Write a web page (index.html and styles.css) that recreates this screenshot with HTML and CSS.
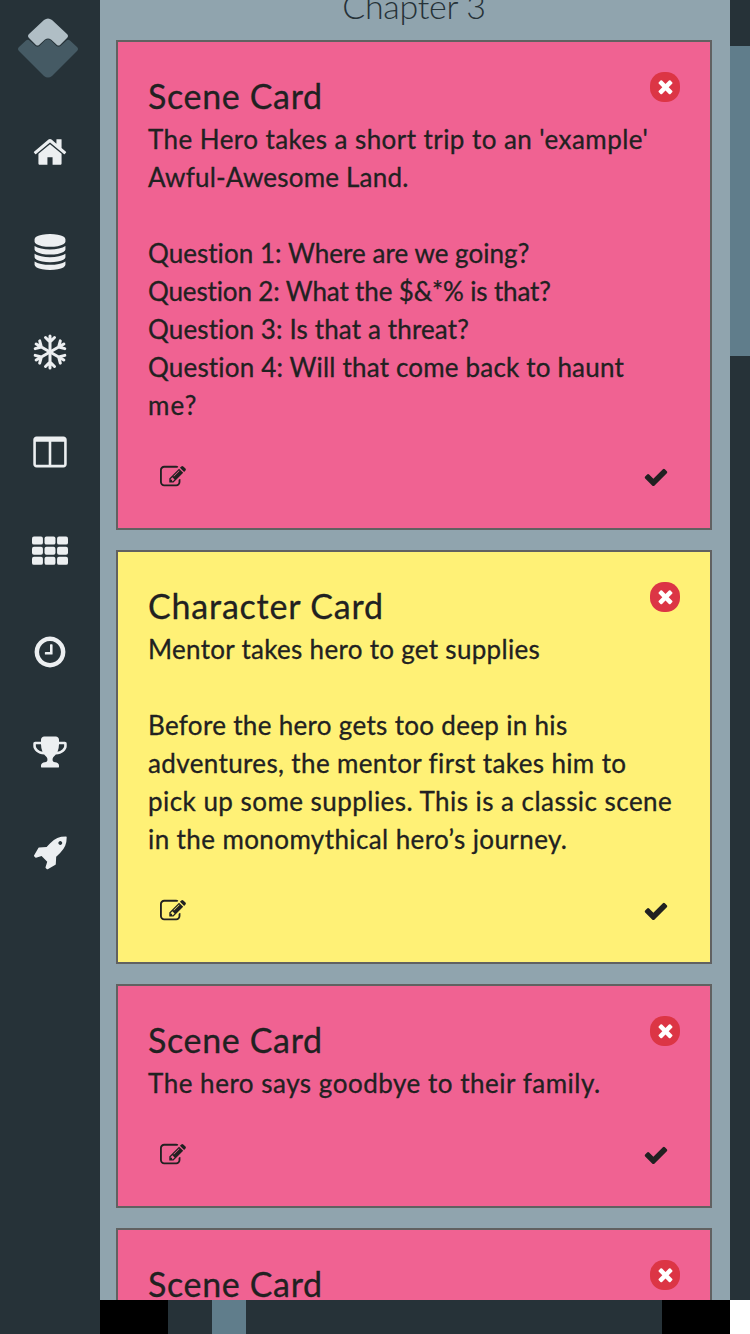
FILE: index.html
```html
<!DOCTYPE html>
<html lang="en">
<head>
<meta charset="utf-8">
<title>Chapter 3</title>
<link rel="stylesheet" href="styles.css">
</head>
<body>
<svg class="defs" width="0" height="0">
  <symbol id="check" viewBox="0 0 1792 1792"><path d="M1671 566q0 40-28 68l-724 724-136 136q-28 28-68 28t-68-28l-136-136-362-362q-28-28-28-68t28-68l136-136q28-28 68-28t68 28l294 295 656-657q28-28 68-28t68 28l136 136q28 28 28 68z"/></symbol>
  <symbol id="close" viewBox="0 0 1792 1792"><path d="M1490 1322q0 40-28 68l-136 136q-28 28-68 28t-68-28l-294-294-294 294q-28 28-68 28t-68-28l-136-136q-28-28-28-68t28-68l294-294-294-294q-28-28-28-68t28-68l136-136q28-28 68-28t68 28l294 294 294-294q28-28 68-28t68 28l136 136q28 28 28 68t-28 68l-294 294 294 294q28 28 28 68z"/></symbol>
  <symbol id="edit" viewBox="0 0 1792 1792"><path d="M888 1184l116-116-152-152-116 116v56h96v96h56zm440-720q-16-16-33 1l-350 350q-17 17-1 33t33-1l350-350q17-17 1-33zm80 594v190q0 119-84.5 203.5t-203.5 84.5h-832q-119 0-203.5-84.5t-84.5-203.5v-832q0-119 84.5-203.5t203.5-84.5h832q63 0 117 25 15 7 18 23 3 17-9 29l-49 49q-14 14-32 8-23-6-45-6h-832q-66 0-113 47t-47 113v832q0 66 47 113t113 47h832q66 0 113-47t47-113v-126q0-13 9-22l64-64q15-15 35-7t20 29zm-96-738l288 288-672 672h-288v-288zm444 132l-92 92-288-288 92-92q28-28 68-28t68 28l152 152q28 28 28 68t-28 68z"/></symbol>
</svg>
<div class="app">
  <nav class="sidebar">
    <a class="logo"><svg width="62" height="62" viewBox="0 0 62 62">
      <path class="logo-base" d="M2 29 L9 22.500 Q11 21 13 23 L18.500 28 Q20.500 29.500 22.500 28 L28 22.500 Q31 20 34 22.500 L39.500 28 Q41.500 29.500 43.500 28 L49 23 Q51 21 53 22.500 L60 29 Q62 31 60 33 L35 58 Q31 61 27 58 L2 33 Q0 31 2 29Z"/>
      <path class="logo-peak" d="M12 16 L27 2 Q31 -1 35 2 L50 16 Q52 18 50 20 L43 27 Q41.500 28 40 27 L34 21.500 Q31 19.500 28 21.500 L22 27 Q20.500 28 19 27 L12 20 Q10 18 12 16Z"/>
    </svg></a>
    <a class="nav-item"><svg class="icon" viewBox="0 0 1792 1792"><path d="M1472 992v480q0 26-19 45t-45 19h-384v-384h-256v384h-384q-26 0-45-19t-19-45v-480q0-1 .5-3t.5-3l575-474 575 474q1 2 1 6zm223-69l-62 74q-8 9-21 11h-3q-13 0-21-7l-692-577-692 577q-12 8-24 7-13-2-21-11l-62-74q-8-10-7-23.500t11-21.500l719-599q32-26 76-26t76 26l244 204v-195q0-14 9-23t23-9h192q14 0 23 9t9 23v408l219 182q10 8 11 21.500t-7 23.500z"/></svg></a>
    <a class="nav-item"><svg class="icon" viewBox="0 0 1792 1792"><path d="M896 768q237 0 443-43t325-127v170q0 69-103 128t-280 93.500-385 34.500-385-34.500-280-93.500-103-128v-170q119 84 325 127t443 43zm0 768q237 0 443-43t325-127v170q0 69-103 128t-280 93.500-385 34.500-385-34.500-280-93.500-103-128v-170q119 84 325 127t443 43zm0-384q237 0 443-43t325-127v170q0 69-103 128t-280 93.500-385 34.500-385-34.500-280-93.500-103-128v-170q119 84 325 127t443 43zm0-1152q208 0 385 34.500t280 93.500 103 128v128q0 69-103 128t-280 93.500-385 34.500-385-34.500-280-93.500-103-128v-128q0-69 103-128t280-93.500 385-34.500z"/></svg></a>
    <a class="nav-item"><svg class="icon stroked" viewBox="-18 -18 36 36">
      <g id="arm"><path d="M0 0V-16M-4.500 -14.500L0 -10L4.500 -14.500"/></g>
      <use href="#arm" transform="rotate(60)"/><use href="#arm" transform="rotate(120)"/><use href="#arm" transform="rotate(180)"/><use href="#arm" transform="rotate(240)"/><use href="#arm" transform="rotate(300)"/>
    </svg></a>
    <a class="nav-item"><svg class="icon" viewBox="0 0 1792 1792"><path d="M224 1536h608v-1152h-640v1120q0 13 9.500 22.500t22.500 9.500zm1376-32v-1120h-640v1152h608q13 0 22.500-9.500t9.500-22.500zm128-1216v1216q0 66-47 113t-113 47h-1344q-66 0-113-47t-47-113v-1216q0-66 47-113t113-47h1344q66 0 113 47t47 113z"/></svg></a>
    <a class="nav-item"><svg class="icon" viewBox="0 0 1792 1792">
      <rect x="0" y="128" width="544" height="400" rx="96"/><rect x="624" y="128" width="544" height="400" rx="96"/><rect x="1248" y="128" width="544" height="400" rx="96"/>
      <rect x="0" y="632" width="544" height="400" rx="96"/><rect x="624" y="632" width="544" height="400" rx="96"/><rect x="1248" y="632" width="544" height="400" rx="96"/>
      <rect x="0" y="1136" width="544" height="400" rx="96"/><rect x="624" y="1136" width="544" height="400" rx="96"/><rect x="1248" y="1136" width="544" height="400" rx="96"/>
    </svg></a>
    <a class="nav-item"><svg class="icon" viewBox="0 0 1792 1792"><path d="M1024 544v448q0 14-9 23t-23 9h-320q-14 0-23-9t-9-23v-64q0-14 9-23t23-9h224v-352q0-14 9-23t23-9h64q14 0 23 9t9 23zm416 352q0-148-73-273t-198-198-273-73-273 73-198 198-73 273 73 273 198 198 273 73 273-73 198-198 73-273zm224 0q0 209-103 385.500t-279.500 279.500-385.500 103-385.500-103-279.500-279.500-103-385.500 103-385.500 279.500-279.500 385.500-103 385.500 103 279.500 279.500 103 385.500z"/></svg></a>
    <a class="nav-item"><svg class="icon" viewBox="0 0 1792 1792"><path d="M522 883q-74-162-74-371h-256v96q0 78 94.500 162t235.500 113zm1078-275v-96h-256q0 209-74 371 141-29 235.500-113t94.500-162zm128-128v128q0 71-41.500 143t-112 130-173 97.500-215.500 44.500q-42 54-95 95-38 34-52.500 72.500t-14.500 89.500q0 54 30.500 91t97.500 37q75 0 133.500 45.500t58.500 114.500v64q0 14-9 23t-23 9h-832q-14 0-23-9t-9-23v-64q0-69 58.500-114.500t133.500-45.500q67 0 97.500-37t30.500-91q0-51-14.500-89.500t-52.500-72.500q-53-41-95-95-113-5-215.500-44.500t-173-97.500-112-130-41.500-143v-128q0-40 28-68t68-28h288v-96q0-66 47-113t113-47h576q66 0 113 47t47 113v96h288q40 0 68 28t28 68z"/></svg></a>
    <a class="nav-item"><svg class="icon" viewBox="-64 0 1792 1792"><path d="M1440 448q0-40-28-68t-68-28-68 28-28 68 28 68 68 28 68-28 28-68zm224-288q0 249-75.500 430.500t-253.500 360.500q-81 80-195 176l-20 379q-2 16-16 26l-384 224q-7 4-16 4-12 0-23-9l-64-64q-13-14-8-32l85-276-281-281-276 85q-3 1-9 1-14 0-23-9l-64-64q-17-19-5-39l224-384q10-14 26-16l379-20q96-114 176-195 188-187 358-258t431-71q14 0 24 9.500t10 22.500z"/></svg></a>
  </nav>
  <div class="main">
    <div class="viewport">
      <main class="column">
        <h1 class="chapter">Chapter 3</h1>
        <article class="card scene">
          <button class="close"><svg><use href="#close"/></svg></button>
          <h2 class="title t-scene">Scene Card</h2>
          <div class="body"><span class="l1">The Hero takes a short trip to an 'example'</span><span class="l2">Awful-Awesome Land.</span><br><span class="l3">Question 1: Where are we going?</span><span class="l4">Question 2: What the $&amp;*% is that?</span><span class="l5">Question 3: Is that a threat?</span><span class="l6">Question 4: Will that come back to haunt</span><span class="l7">me?</span></div>
          <footer class="actions"><svg><use href="#edit"/></svg><svg><use href="#check"/></svg></footer>
        </article>
        <article class="card character">
          <button class="close"><svg><use href="#close"/></svg></button>
          <h2 class="title t-char">Character Card</h2>
          <div class="body"><span class="l8">Mentor takes hero to get supplies</span><br><span class="l9">Before the hero gets too deep in his</span><span class="l10">adventures, the mentor first takes him to</span><span class="l11">pick up some supplies. This is a classic scene</span><span class="l12">in the monomythical hero’s journey.</span></div>
          <footer class="actions"><svg><use href="#edit"/></svg><svg><use href="#check"/></svg></footer>
        </article>
        <article class="card scene">
          <button class="close"><svg><use href="#close"/></svg></button>
          <h2 class="title t-scene">Scene Card</h2>
          <div class="body"><span class="l13">The hero says goodbye to their family.</span></div>
          <footer class="actions"><svg><use href="#edit"/></svg><svg><use href="#check"/></svg></footer>
        </article>
        <article class="card scene">
          <button class="close"><svg><use href="#close"/></svg></button>
          <h2 class="title t-scene">Scene Card</h2>
        </article>
      </main>
      <div class="scroll-y"><div class="thumb-y"></div></div>
    </div>
    <div class="bottom">
      <div class="cap"></div><div class="scroll-x"><div class="thumb-x"></div></div><div class="cap"></div><div class="corner"></div>
    </div>
  </div>
</div>
</body>
</html>
```

FILE: styles.css
```css
* { box-sizing: border-box; }
body { margin: 0; overflow: hidden; font-family: Lato, "Liberation Sans", sans-serif; color: #212121; font-variant-ligatures: none; }
.defs { position: absolute; }
.app { display: flex; height: 1334px; background: #263238; }
.sidebar { width: 100px; flex: none; display: flex; flex-direction: column; align-items: center; }
.logo { height: 102px; padding-top: 18px; margin-right: 4px; }
.logo svg, .icon { display: block; }
.logo-base { fill: #455a64; }
.logo-peak { fill: #b0bec5; stroke: #263238; stroke-width: 1; paint-order: stroke; }
.nav-item { height: 100px; display: flex; align-items: center; }
.icon { width: 36px; height: 36px; fill: #eceff1; }
.stroked { fill: none; stroke: #eceff1; stroke-width: 3; stroke-linecap: round; stroke-linejoin: round; }
.main { flex: 1; display: flex; flex-direction: column; }
.viewport { height: 1300px; display: flex; overflow: hidden; }
.column { width: 630px; height: 1300px; overflow: hidden; background: #90a4ae; padding: 0 18px 0 16px; display: flex; flex-direction: column; gap: 20px; }
.chapter { margin: -14px 0 -6px; height: 40px; line-height: 40px; flex: none; text-align: center; font-size: 34px; font-weight: 300; letter-spacing: -.3px; color: #263238; }
.card { position: relative; flex: none; border: 2px solid #616161; padding: 30px; }
.scene { background: #f06292; }
.character { background: #fff176; }
.title { margin: 0; height: 48px; line-height: 48px; font-size: 34px; font-weight: 400; white-space: nowrap; -webkit-text-stroke: .3px #212121; }
.t-scene { letter-spacing: .65px; }
.t-char { letter-spacing: .8px; }
.body { font-size: 26px; line-height: 38px; white-space: nowrap; -webkit-text-stroke: .3px #212121; }
.body span { display: table; }
.l1 { letter-spacing: .44px; }
.l2 { letter-spacing: .2px; }
.l3 { letter-spacing: .04px; }
.l4 { letter-spacing: -.14px; }
.l5 { letter-spacing: .14px; }
.l6 { letter-spacing: .18px; }
.l7 { letter-spacing: 1.2px; }
.l8 { letter-spacing: .3px; }
.l9 { letter-spacing: .32px; }
.l10 { letter-spacing: .37px; }
.l11 { letter-spacing: .46px; }
.l12 { letter-spacing: .4px; }
.l13 { letter-spacing: .52px; }
.close { position: absolute; right: 30px; top: 30px; width: 30px; height: 30px; border: 0; border-radius: 14px; padding: 0 0 1px; display: flex; align-items: center; justify-content: center; background: #dc3545; }
.close svg { width: 21px; height: 21px; fill: #fff; }
.actions { height: 74px; padding: 40px 11.5px 0 12px; display: flex; justify-content: space-between; }
.actions svg { width: 26px; height: 26px; fill: #212121; }
.scroll-y { width: 20px; padding-top: 46px; background: #263238; }
.thumb-y { height: 310px; background: #607d8b; }
.bottom { height: 34px; display: flex; }
.cap { width: 68px; background: #000; }
.scroll-x { width: 494px; padding-left: 44px; background: #263238; }
.thumb-x { width: 34px; height: 34px; background: #607d8b; }
.corner { width: 20px; background: #fff; }
```
